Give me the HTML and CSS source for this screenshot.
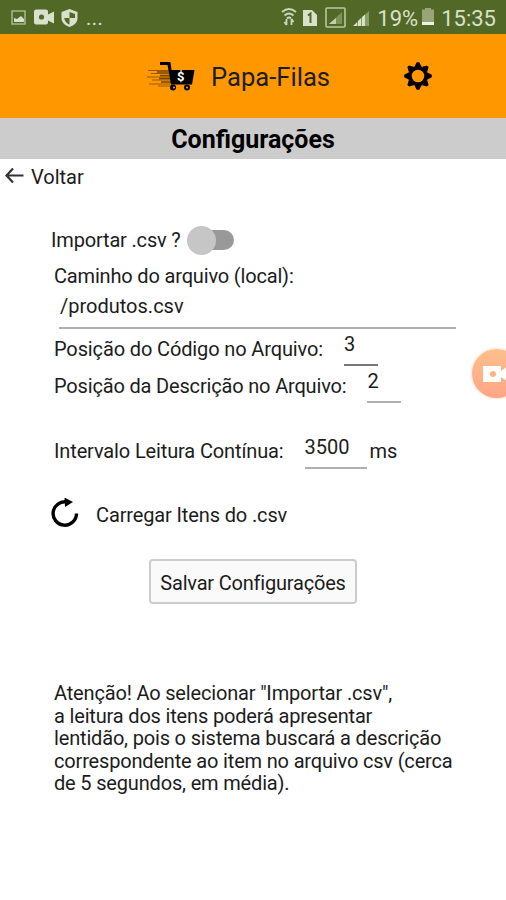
FILE: index.html
```html
<!DOCTYPE html>
<html lang="pt-BR">
<head>
    <meta charset="UTF-8">
    <meta name="viewport" content="width=device-width, initial-scale=1.0">
    <title>Papa-Filas</title>
    <link rel="stylesheet" href="styles.css">
</head>
<body>
    <div class="status-bar">
        <div class="status-left">
            <svg width="92" height="22" viewBox="0 0 92 22">
                <rect x="2" y="5" width="13" height="13" fill="none" stroke="#a9b78f" stroke-width="1.5"/>
                <path d="M4 16V12l3 1 4-3 3 3v3z" fill="#d9e0cc"/>
                <path d="M26 3.500h10a2 2 0 0 1 2 2v3l6-3v12l-6-3v2a2 2 0 0 1-2 2H26a2 2 0 0 1-2-2V5.500a2 2 0 0 1 2-2z" fill="#d9e0cc"/>
                <circle cx="31.500" cy="11" r="2.600" fill="#526826"/>
                <path d="M59.500 3l8 3v6c0 4-3 7.500-8 9-5-1.500-8-5-8-9V6z" fill="#d9e0cc"/>
                <path d="M59.500 6v6h5.500V8zM59.500 12v6.500c-3-1.200-5-3.500-5.300-6.500z" fill="#526826"/>
            </svg>
            <span class="dots">...</span>
        </div>
        <div class="status-right">
            <svg class="signals" width="92" height="22" viewBox="0 0 92 22">
                <g fill="none" stroke="#cbd4bb" stroke-width="1.800">
                    <path d="M1 6q7-6 14 0M3.500 9.500q4.500-4 9 0"/>
                    <path d="M6 12.500q2-2 4 0M5.500 13v6M3.500 16l2 3M10.500 19v-6M10.500 13l2 3"/>
                </g>
                <path d="M22 4h9l5 5v11H22z" fill="#d9e0cc"/>
                <path d="M27 9.500l2.500-2V17" fill="none" stroke="#526826" stroke-width="2"/>
                <rect x="45" y="2" width="19" height="19" rx="1" fill="none" stroke="#b9c69f" stroke-width="1.600"/>
                <path d="M48 18l13-12v12z" fill="#7f9159"/>
                <path d="M48 18l7-6v6z" fill="#c5cfb1"/>
                <path d="M72 20L88 5v15z" fill="#8b9b69"/>
                <path d="M72 20l4-3.500V20zM77 20v-5l3-3v8zM81 20v-9l3-2.500V20z" fill="#d9e0cc"/>
            </svg>
            <span>19%</span>
            <svg class="battery" width="12" height="18" viewBox="0 0 12 18">
                <path d="M3 0h6v1.500h3V17H0V1.500h3z" fill="#97a578"/>
                <path d="M0 14h12v3H0z" fill="#eef2e6"/>
            </svg>
            <span>15:35</span>
        </div>
    </div>

    <header class="header">
        <svg class="cart" width="50" height="34" viewBox="0 0 50 34">
            <g stroke="#2c1b00">
                <path d="M2 11.500h23M5 14.500h20M1 18h24M6 21h19M3 25h23M12 27h12" stroke-width="0.800" opacity="0.600"/>
                <path d="M11 13h14M14 16.500h11M13 19.500h12M15 23h10" stroke-width="1.500" opacity="0.650"/>
            </g>
            <path d="M14 4.500h9l1 6.500" fill="none" stroke="#000" stroke-width="3.200"/>
            <path d="M22.500 11H48.500l-2.500 14.500H25z" fill="#000"/>
            <circle cx="27" cy="28.500" r="3" fill="#000"/>
            <circle cx="41" cy="28.500" r="3" fill="#000"/>
            <circle cx="28" cy="28.500" r="1" fill="#ff9800"/>
            <circle cx="41" cy="28.500" r="1" fill="#ff9800"/>
            <text class="cart-sign" x="31" y="22">$</text>
        </svg>
        <h1 class="app-name">Papa-Filas</h1>
        <svg class="gear" width="28" height="28" viewBox="-14 -14 28 28">
            <circle r="8" fill="none" stroke="#000" stroke-width="3.400"/>
            <g id="teeth">
                <path id="tooth" d="M-3.800-9L-1.200-13.800h2.400L3.800-9z"/>
                <use href="#tooth" transform="rotate(45)"/>
                <use href="#tooth" transform="rotate(90)"/>
                <use href="#tooth" transform="rotate(135)"/>
            </g>
            <use href="#teeth" transform="rotate(180)"/>
        </svg>
    </header>
    <h2 class="title">Configurações</h2>

    <div class="back">
        <svg width="20" height="18" viewBox="0 0 20 18">
            <path d="M19.500 7.500H3M9 0.500L2.500 7.500 9 14.500" fill="none" stroke="#333" stroke-width="2.200"/>
        </svg>
        <span>Voltar</span>
    </div>

    <main class="settings">
        <div class="row import-row">
            <span class="import-label">Importar .csv ?</span>
            <div class="switch"><div class="knob"></div></div>
        </div>
        <div class="path-label"><span>Caminho do arquivo (local):</span></div>
        <div class="field path-field"><span>/produtos.csv</span></div>
        <div class="row">
            <span class="code-label">Posição do Código no Arquivo:</span>
            <div class="field small dark"><span>3</span></div>
        </div>
        <div class="row">
            <span class="desc-label">Posição da Descrição no Arquivo:</span>
            <div class="field small"><span>2</span></div>
        </div>
        <div class="row interval-row">
            <span class="interval-label">Intervalo Leitura Contínua:</span>
            <div class="field interval"><span>3500</span></div>
            <span class="unit">ms</span>
        </div>
        <div class="row reload-row">
            <svg width="30" height="32" viewBox="0 0 30 32">
                <path d="M17 4A11.700 11.700 0 1 0 26.500 15.500" fill="none" stroke="#000" stroke-width="3.400"/>
                <path d="M14.500 -0.500L23 4l-8 5z"/>
            </svg>
            <span class="reload-label">Carregar Itens do .csv</span>
        </div>
        <button class="save">Salvar Configurações</button>
        <p class="warning">
            Atenção! Ao selecionar "Importar .csv",<br>
            a leitura dos itens poderá apresentar<br>
            lentidão, pois o sistema buscará a descrição<br>
            correspondente ao item no arquivo csv (cerca<br>
            de 5 segundos, em média).
        </p>
    </main>

    <div class="recorder">
        <svg width="30" height="20" viewBox="0 0 30 20">
            <path d="M1 2h18v5l7-5v16l-7-5v5H1z" fill="#fff"/>
            <circle cx="11" cy="10" r="3" fill="#ffb37e"/>
        </svg>
    </div>
</body>
</html>
```

FILE: styles.css
```css
* {
    box-sizing: border-box;
}
body {
    margin: 0;
    height: 900px;
    overflow: hidden;
    position: relative;
    background-color: white;
    color: #1c1c1c;
    font-family: Roboto, "Noto Sans", sans-serif;
    font-size: 20px;
    white-space: nowrap;
}
svg {
    display: block;
    flex-shrink: 0;
}

/* Phone status bar */
.status-bar {
    display: flex;
    justify-content: space-between;
    height: 34px;
    padding: 0 10px 0 10px;
    background-color: #526826;
    color: #d9e0cc;
}
.status-left, .status-right {
    display: flex;
    align-items: center;
}
.status-right {
    padding-top: 2px;
    font-size: 22px;
}
.status-left svg {
    width: 92px;
    margin-right: -16px;
}
.dots {
    padding-top: 2px;
    letter-spacing: 0.5px;
}
.signals {
    margin: -2px 4px 0 0;
}
.battery {
    margin: -2px 7px 0 4px;
}

/* Orange app header */
.header {
    display: flex;
    align-items: center;
    height: 84px;
    padding-left: 146px;
    background-color: #ff9800;
}
.app-name {
    width: 193px;
    margin: 1px 0 0 15px;
    font-size: 25.6px;
    font-weight: 400;
}
.cart-sign {
    font-size: 13px;
    font-weight: 700;
    fill: white;
}
.title {
    margin: 0;
    height: 41px;
    line-height: 44px;
    background-color: #cccccc;
    color: black;
    font-size: 25px;
    font-weight: 700;
    text-align: center;
}
.back {
    display: flex;
    align-items: center;
    gap: 7px;
    height: 35px;
    padding-left: 4px;
}

/* Settings form */
.settings {
    display: flex;
    flex-direction: column;
    padding: 28px 50px 0 54px;
    letter-spacing: -0.17px;
}
.row {
    display: flex;
    align-items: center;
    height: 37px;
}
.import-row {
    height: 36px;
    margin-left: -3px;
}
.import-row .switch {
    width: 44px;
    height: 20px;
    margin: -1px 0 0 9px;
    border-radius: 10px;
    background-color: #999999;
}
.knob {
    width: 29px;
    height: 29px;
    margin: -4px 0 0 -3px;
    border-radius: 50%;
    background-color: #c6c6c6;
}
.path-label {
    height: 32px;
    line-height: 37px;
}
.field {
    border-bottom: 2px solid #b0b0b0;
    letter-spacing: 0;
}
.path-field {
    height: 39px;
    margin: 0 0 1px 5px;
    padding-left: 1px;
    line-height: 32px;
}
.code-label {
    letter-spacing: -0.13px;
}
.small {
    width: 34px;
    height: 36px;
    margin: -2px 0 0 21px;
    line-height: 29px;
}
.dark {
    border-color: #777777;
}
.interval-row {
    margin-top: 28px;
}
.interval-label {
    letter-spacing: -0.13px;
}
.interval {
    width: 62px;
    height: 37px;
    margin-left: 21px;
    line-height: 30px;
}
.unit {
    margin-left: 3px;
}
.reload-row {
    height: 40px;
    margin: 25px 0 25px -4px;
    gap: 16px;
}
.reload-label {
    padding-top: 1px;
    letter-spacing: -0.13px;
}
.save {
    width: 208px;
    height: 45px;
    margin-left: 95px;
    padding: 2px 0 0;
    border: 2px solid #cccccc;
    border-radius: 4px;
    background-color: #fafafa;
    color: #1c1c1c;
    font: inherit;
    letter-spacing: -0.2px;
}
.warning {
    margin: 78px 0 0;
    line-height: 22.5px;
}

/* Floating screen recorder button */
.recorder {
    position: absolute;
    top: 349px;
    left: 472px;
    display: flex;
    align-items: center;
    width: 49px;
    height: 49px;
    padding-left: 10px;
    border-radius: 50%;
    background: linear-gradient(#fdc08a, #ffa585);
    box-shadow: 0 0 3px #ffc9b0;
}
```
